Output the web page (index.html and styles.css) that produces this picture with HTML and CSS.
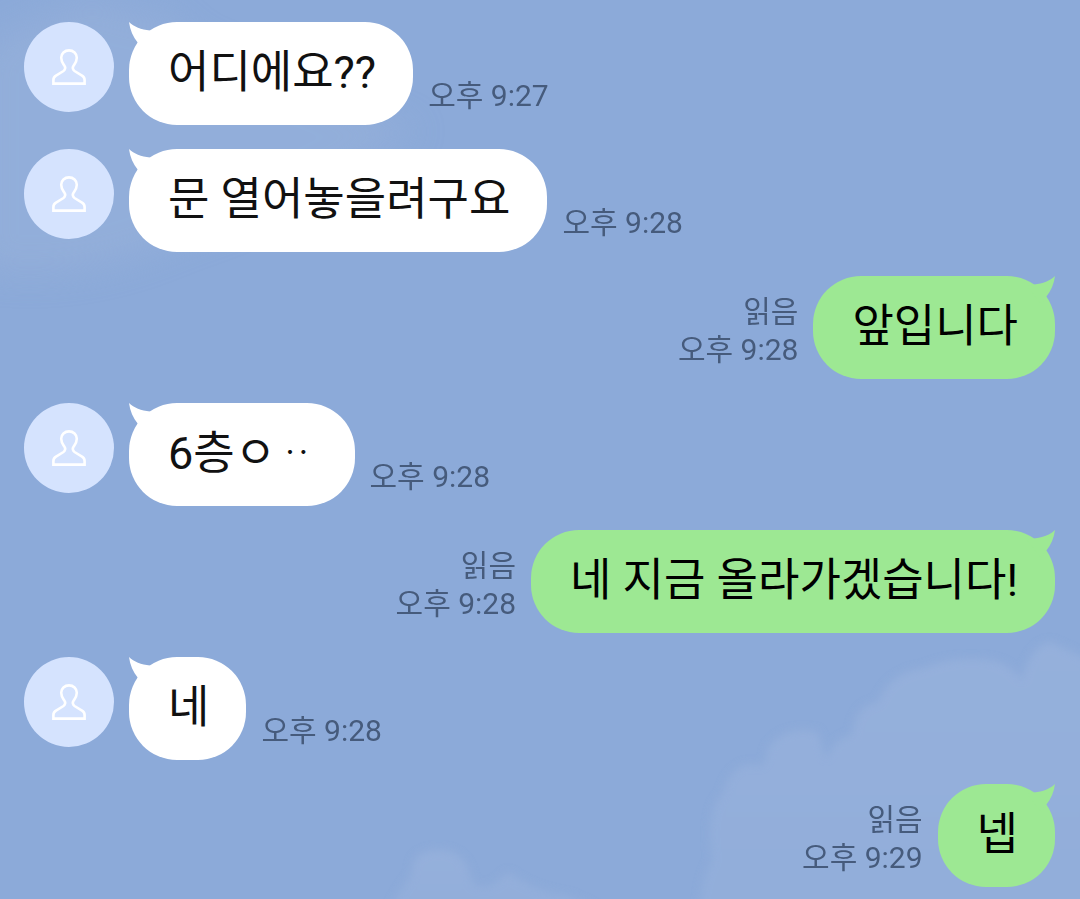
FILE: index.html
```html
<!DOCTYPE html>
<html lang="ko">
<head>
  <meta charset="UTF-8">
  <meta name="viewport" content="width=device-width, initial-scale=1">
  <title>채팅</title>
  <link rel="stylesheet" href="styles.css">
</head>
<body>

  <!-- shared shapes -->
  <svg class="defs" aria-hidden="true">
    <symbol id="person" viewBox="0 0 34 36">
      <path d="M17 1.400C12.600 1.400 9.200 4.500 9.200 8.700C9.200 12.300 10.800 14.300 12.200 16.300C13.800 18.600 13.300 20.800 11.500 22L4 26.600C2 27.800 1.400 29 1.400 31V34.600H32.600V31C32.600 29 32 27.800 30 26.600L22.500 22C20.700 20.800 20.200 18.600 21.800 16.300C23.200 14.300 24.800 12.300 24.800 8.700C24.800 4.500 21.400 1.400 17 1.400z" fill="none" stroke="#fff" stroke-width="2.600"/>
    </symbol>
    <symbol id="tail" viewBox="0 0 30 30">
      <path d="M0 0C5 5 12 7.500 21 8.500L28 10 14 28 9 21C4 15 1 8 0 0z" fill="currentColor"/>
    </symbol>
  </svg>

  <!-- sky -->
  <svg class="sky" viewBox="0 0 1080 899" preserveAspectRatio="xMidYMax slice" aria-hidden="true">
    <defs>
      <filter id="soft" x="-10%" y="-10%" width="120%" height="120%"><feGaussianBlur stdDeviation="4"/></filter>
      <filter id="haze" x="-20%" y="-20%" width="140%" height="140%"><feGaussianBlur stdDeviation="16"/></filter>
      <linearGradient id="cloud" x1="0" y1="0" x2="0" y2="1">
        <stop offset="0" stop-color="#95b0db"/>
        <stop offset="1" stop-color="#92aeda"/>
      </linearGradient>
    </defs>
    <path d="M-20 50Q20 20 50 15Q90-15 130 12Q170 8 190 40Q330 100 420 130Q300 200 180 240Q80 285-20 270z" fill="#97b1da" opacity=".6" filter="url(#haze)"/>
    <g filter="url(#soft)">
      <path d="M700 910Q700 880 712 860Q705 810 722 795Q730 765 752 764Q766 772 768 748Q785 725 818 732L826 760Q834 738 852 735Q854 706 878 702Q890 672 925 668Q950 656 990 660Q1010 664 1022 680Q1030 646 1050 642L1090 660V910z" fill="url(#cloud)"/>
      <path d="M390 910Q400 888 412 875Q410 850 440 850Q466 850 472 882Q486 895 508 872Q530 890 570 896L600 910z" fill="url(#cloud)"/>
    </g>
  </svg>

  <main class="chat">
    <div class="message received">
      <div class="avatar"><svg class="person"><use href="#person"/></svg></div>
      <div class="bubble"><svg class="tail"><use href="#tail"/></svg>어디에요??</div>
      <div class="meta"><time>오후 9:27</time></div>
    </div>

    <div class="message received">
      <div class="avatar"><svg class="person"><use href="#person"/></svg></div>
      <div class="bubble"><svg class="tail"><use href="#tail"/></svg>문 열어놓을려구요</div>
      <div class="meta"><time>오후 9:28</time></div>
    </div>

    <div class="message sent">
      <div class="meta"><span>읽음</span><time>오후 9:28</time></div>
      <div class="bubble"><svg class="tail"><use href="#tail"/></svg>앞입니다</div>
    </div>

    <div class="message received">
      <div class="avatar"><svg class="person"><use href="#person"/></svg></div>
      <div class="bubble"><svg class="tail"><use href="#tail"/></svg>6층ㅇᆢ</div>
      <div class="meta"><time>오후 9:28</time></div>
    </div>

    <div class="message sent">
      <div class="meta"><span>읽음</span><time>오후 9:28</time></div>
      <div class="bubble"><svg class="tail"><use href="#tail"/></svg>네 지금 올라가겠습니다!</div>
    </div>

    <div class="message received">
      <div class="avatar"><svg class="person"><use href="#person"/></svg></div>
      <div class="bubble"><svg class="tail"><use href="#tail"/></svg>네</div>
      <div class="meta"><time>오후 9:28</time></div>
    </div>

    <div class="message sent">
      <div class="meta"><span>읽음</span><time>오후 9:29</time></div>
      <div class="bubble"><svg class="tail"><use href="#tail"/></svg>넵</div>
    </div>
  </main>

</body>
</html>
```

FILE: styles.css
```css
* {
  box-sizing: border-box;
}

body {
  margin: 0;
  background: #8caad9;
  font-family: Roboto, "Noto Sans CJK KR", sans-serif;
}

.defs {
  position: absolute;
  width: 0;
  height: 0;
}

.sky {
  position: fixed;
  inset: 0;
  width: 100%;
  height: 100%;
  z-index: -1;
}

.chat {
  display: flex;
  flex-direction: column;
  gap: 24px;
  padding: 22px 25px 12px 24px;
}

.message {
  display: flex;
  align-items: flex-end;
  gap: 15px;
}

.sent {
  justify-content: flex-end;
}

.avatar {
  display: flex;
  align-items: center;
  justify-content: center;
  align-self: flex-start;
  flex: none;
  width: 90px;
  height: 90px;
  border-radius: 50%;
  background: #d5e3fe;
}

.person {
  width: 34px;
  height: 36px;
}

.bubble {
  position: relative;
  padding: 19px 37px 20px 39px;
  border-radius: 48px;
  background: #fff;
  color: #111;
  font-size: 45px;
  line-height: 64px;
}

.sent .bubble {
  background: #9de893;
  color: #000;
}

.tail {
  position: absolute;
  top: 0;
  left: 0;
  width: 30px;
  height: 30px;
  color: #fff;
}

.sent .tail {
  left: auto;
  right: 0;
  color: #9de893;
  transform: scaleX(-1);
}

.meta {
  display: flex;
  flex-direction: column;
  align-items: flex-end;
  flex: none;
  padding-bottom: 10px;
  color: #465b7c;
  font-size: 30px;
  line-height: 38px;
}
```
